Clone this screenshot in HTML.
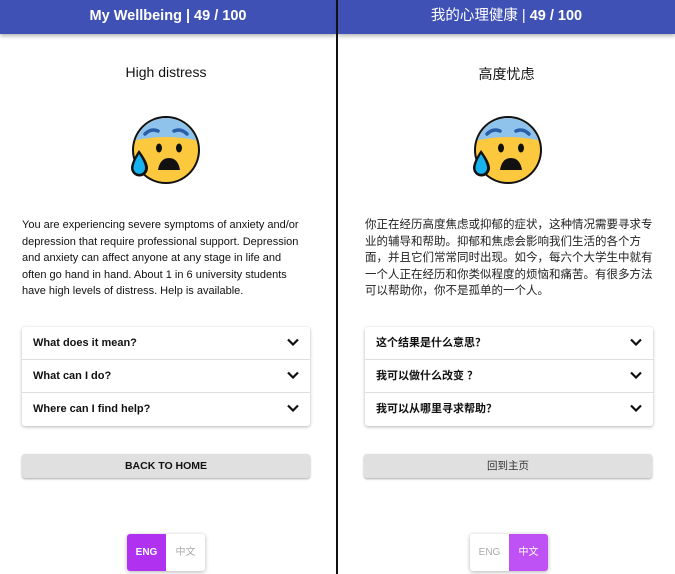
<!DOCTYPE html>
<html><head><meta charset="utf-8"><style>
*{margin:0;padding:0;box-sizing:border-box}
body{width:675px;height:574px;overflow:hidden;background:#fff;font-family:"Liberation Sans","Noto Sans CJK SC",sans-serif;color:#111;position:relative}
.hdr{position:absolute;top:0;height:34px;background:#3f51b5;color:#fff;font-size:14.5px;font-weight:bold;text-align:center;line-height:32px;box-shadow:0 2px 4px rgba(0,0,0,.3);z-index:2}
.div{position:absolute;left:336px;top:0;width:2px;height:574px;background:#111;z-index:3}
.t{position:absolute;font-size:14px;text-align:center}
.emo{position:absolute;top:112px}
.p{position:absolute;top:217px;font-size:11px;line-height:16.5px;color:#111;white-space:nowrap}
.acc{position:absolute;top:327px;width:288px;height:99px;box-shadow:0 1px 3px rgba(0,0,0,.3);border-radius:3px;background:#fff}
.row{height:33px;border-bottom:1px solid #e0e0e0;font-size:11px;font-weight:bold;padding-left:11px;line-height:33px;position:relative}
.row:last-child{border-bottom:none}
.row svg{position:absolute;right:11px;top:11px}
.btn{position:absolute;top:454px;width:288px;height:24px;background:#e0e0e0;border-radius:3px;box-shadow:0 1px 2px rgba(0,0,0,.35);font-size:10.5px;font-weight:bold;text-align:center;line-height:24px}
.tg{position:absolute;top:534px;height:37px;display:flex;box-shadow:0 1px 4px rgba(0,0,0,.3);border-radius:3px;overflow:hidden}
.tg div{width:39px;text-align:center;line-height:37px;font-size:10px;color:#aaa}
.tg .on{background:#b032f0;color:#fff;font-weight:bold}
</style></head><body>
<div class="hdr" style="left:0;width:336px">My Wellbeing | 49 / 100</div>
<div class="hdr" style="left:338px;width:337px;font-weight:normal">我的心理健康 | <b>49 / 100</b></div>
<div class="div"></div>

<div class="t" style="left:0;width:332px;top:64px">High distress</div>
<div class="t" style="left:338px;width:337px;top:64px">高度忧虑</div>

<svg class="emo" style="left:128px" width="76" height="76" viewBox="0 0 76 76">
<defs><clipPath id="c1"><circle cx="38" cy="38" r="32"/></clipPath></defs>
<circle cx="38" cy="38" r="34" fill="#111"/>
<g clip-path="url(#c1)"><rect x="0" y="0" width="76" height="76" fill="#fcc83e"/><path d="M0 0H76V30Q38 20 0 30Z" fill="#8fc3ec"/></g>
<path d="M17 22Q23 16 30 19M46 19Q53 16 59 22" stroke="#2a5fa8" stroke-width="3.5" fill="none" stroke-linecap="round"/>
<ellipse cx="31" cy="36" rx="3" ry="4.5" fill="#111"/><ellipse cx="51" cy="36" rx="3" ry="4.5" fill="#111"/>
<path d="M30 58Q32 46 41 46Q50 46 52 58Z" fill="#111"/>
<path d="M11 38Q3 50 3 56A8.5 8.5 0 0 0 20 56Q20 50 11 38Z" fill="#111"/>
<path d="M11 42Q5.5 51 5.5 56A5.5 5.5 0 0 0 17 56Q17 51 11 42Z" fill="#18b2ef"/>
</svg>
<svg class="emo" style="left:470px" width="76" height="76" viewBox="0 0 76 76">
<defs><clipPath id="c2"><circle cx="38" cy="38" r="32"/></clipPath></defs>
<circle cx="38" cy="38" r="34" fill="#111"/>
<g clip-path="url(#c2)"><rect x="0" y="0" width="76" height="76" fill="#fcc83e"/><path d="M0 0H76V30Q38 20 0 30Z" fill="#8fc3ec"/></g>
<path d="M17 22Q23 16 30 19M46 19Q53 16 59 22" stroke="#2a5fa8" stroke-width="3.5" fill="none" stroke-linecap="round"/>
<ellipse cx="31" cy="36" rx="3" ry="4.5" fill="#111"/><ellipse cx="51" cy="36" rx="3" ry="4.5" fill="#111"/>
<path d="M30 58Q32 46 41 46Q50 46 52 58Z" fill="#111"/>
<path d="M11 38Q3 50 3 56A8.5 8.5 0 0 0 20 56Q20 50 11 38Z" fill="#111"/>
<path d="M11 42Q5.5 51 5.5 56A5.5 5.5 0 0 0 17 56Q17 51 11 42Z" fill="#18b2ef"/>
</svg>

<div class="p" style="left:22px;width:292px">You are experiencing severe symptoms of anxiety and/or<br>depression that require professional support. Depression<br>and anxiety can affect anyone at any stage in life and<br>often go hand in hand. About 1 in 6 university students<br>have high levels of distress. Help is available.</div>
<div class="p" style="left:365px;width:300px;font-size:11.5px;color:#222">你正在经历高度焦虑或抑郁的症状，这种情况需要寻求专<br>业的辅导和帮助。抑郁和焦虑会影响我们生活的各个方<br>面，并且它们常常同时出现。如今，每六个大学生中就有<br>一个人正在经历和你类似程度的烦恼和痛苦。有很多方法<br>可以帮助你，你不是孤单的一个人。</div>

<div class="acc" style="left:22px">
<div class="row">What does it mean?<svg width="12" height="8" viewBox="0 0 12 8"><path d="M1 1.5L6 6.5L11 1.5" stroke="#111" stroke-width="2.2" fill="none"/></svg></div>
<div class="row">What can I do?<svg width="12" height="8" viewBox="0 0 12 8"><path d="M1 1.5L6 6.5L11 1.5" stroke="#111" stroke-width="2.2" fill="none"/></svg></div>
<div class="row">Where can I find help?<svg width="12" height="8" viewBox="0 0 12 8"><path d="M1 1.5L6 6.5L11 1.5" stroke="#111" stroke-width="2.2" fill="none"/></svg></div>
</div>
<div class="acc" style="left:365px">
<div class="row">这个结果是什么意思？<svg width="12" height="8" viewBox="0 0 12 8"><path d="M1 1.5L6 6.5L11 1.5" stroke="#111" stroke-width="2.2" fill="none"/></svg></div>
<div class="row">我可以做什么改变 ？<svg width="12" height="8" viewBox="0 0 12 8"><path d="M1 1.5L6 6.5L11 1.5" stroke="#111" stroke-width="2.2" fill="none"/></svg></div>
<div class="row">我可以从哪里寻求帮助？<svg width="12" height="8" viewBox="0 0 12 8"><path d="M1 1.5L6 6.5L11 1.5" stroke="#111" stroke-width="2.2" fill="none"/></svg></div>
</div>

<div class="btn" style="left:22px">BACK TO HOME</div>
<div class="btn" style="left:364px;font-weight:normal;color:#333">回到主页</div>

<div class="tg" style="left:127px"><div class="on">ENG</div><div>中文</div></div>
<div class="tg" style="left:470px"><div>ENG</div><div class="on" style="background:#be52f5;font-weight:normal">中文</div></div>
</body></html>
